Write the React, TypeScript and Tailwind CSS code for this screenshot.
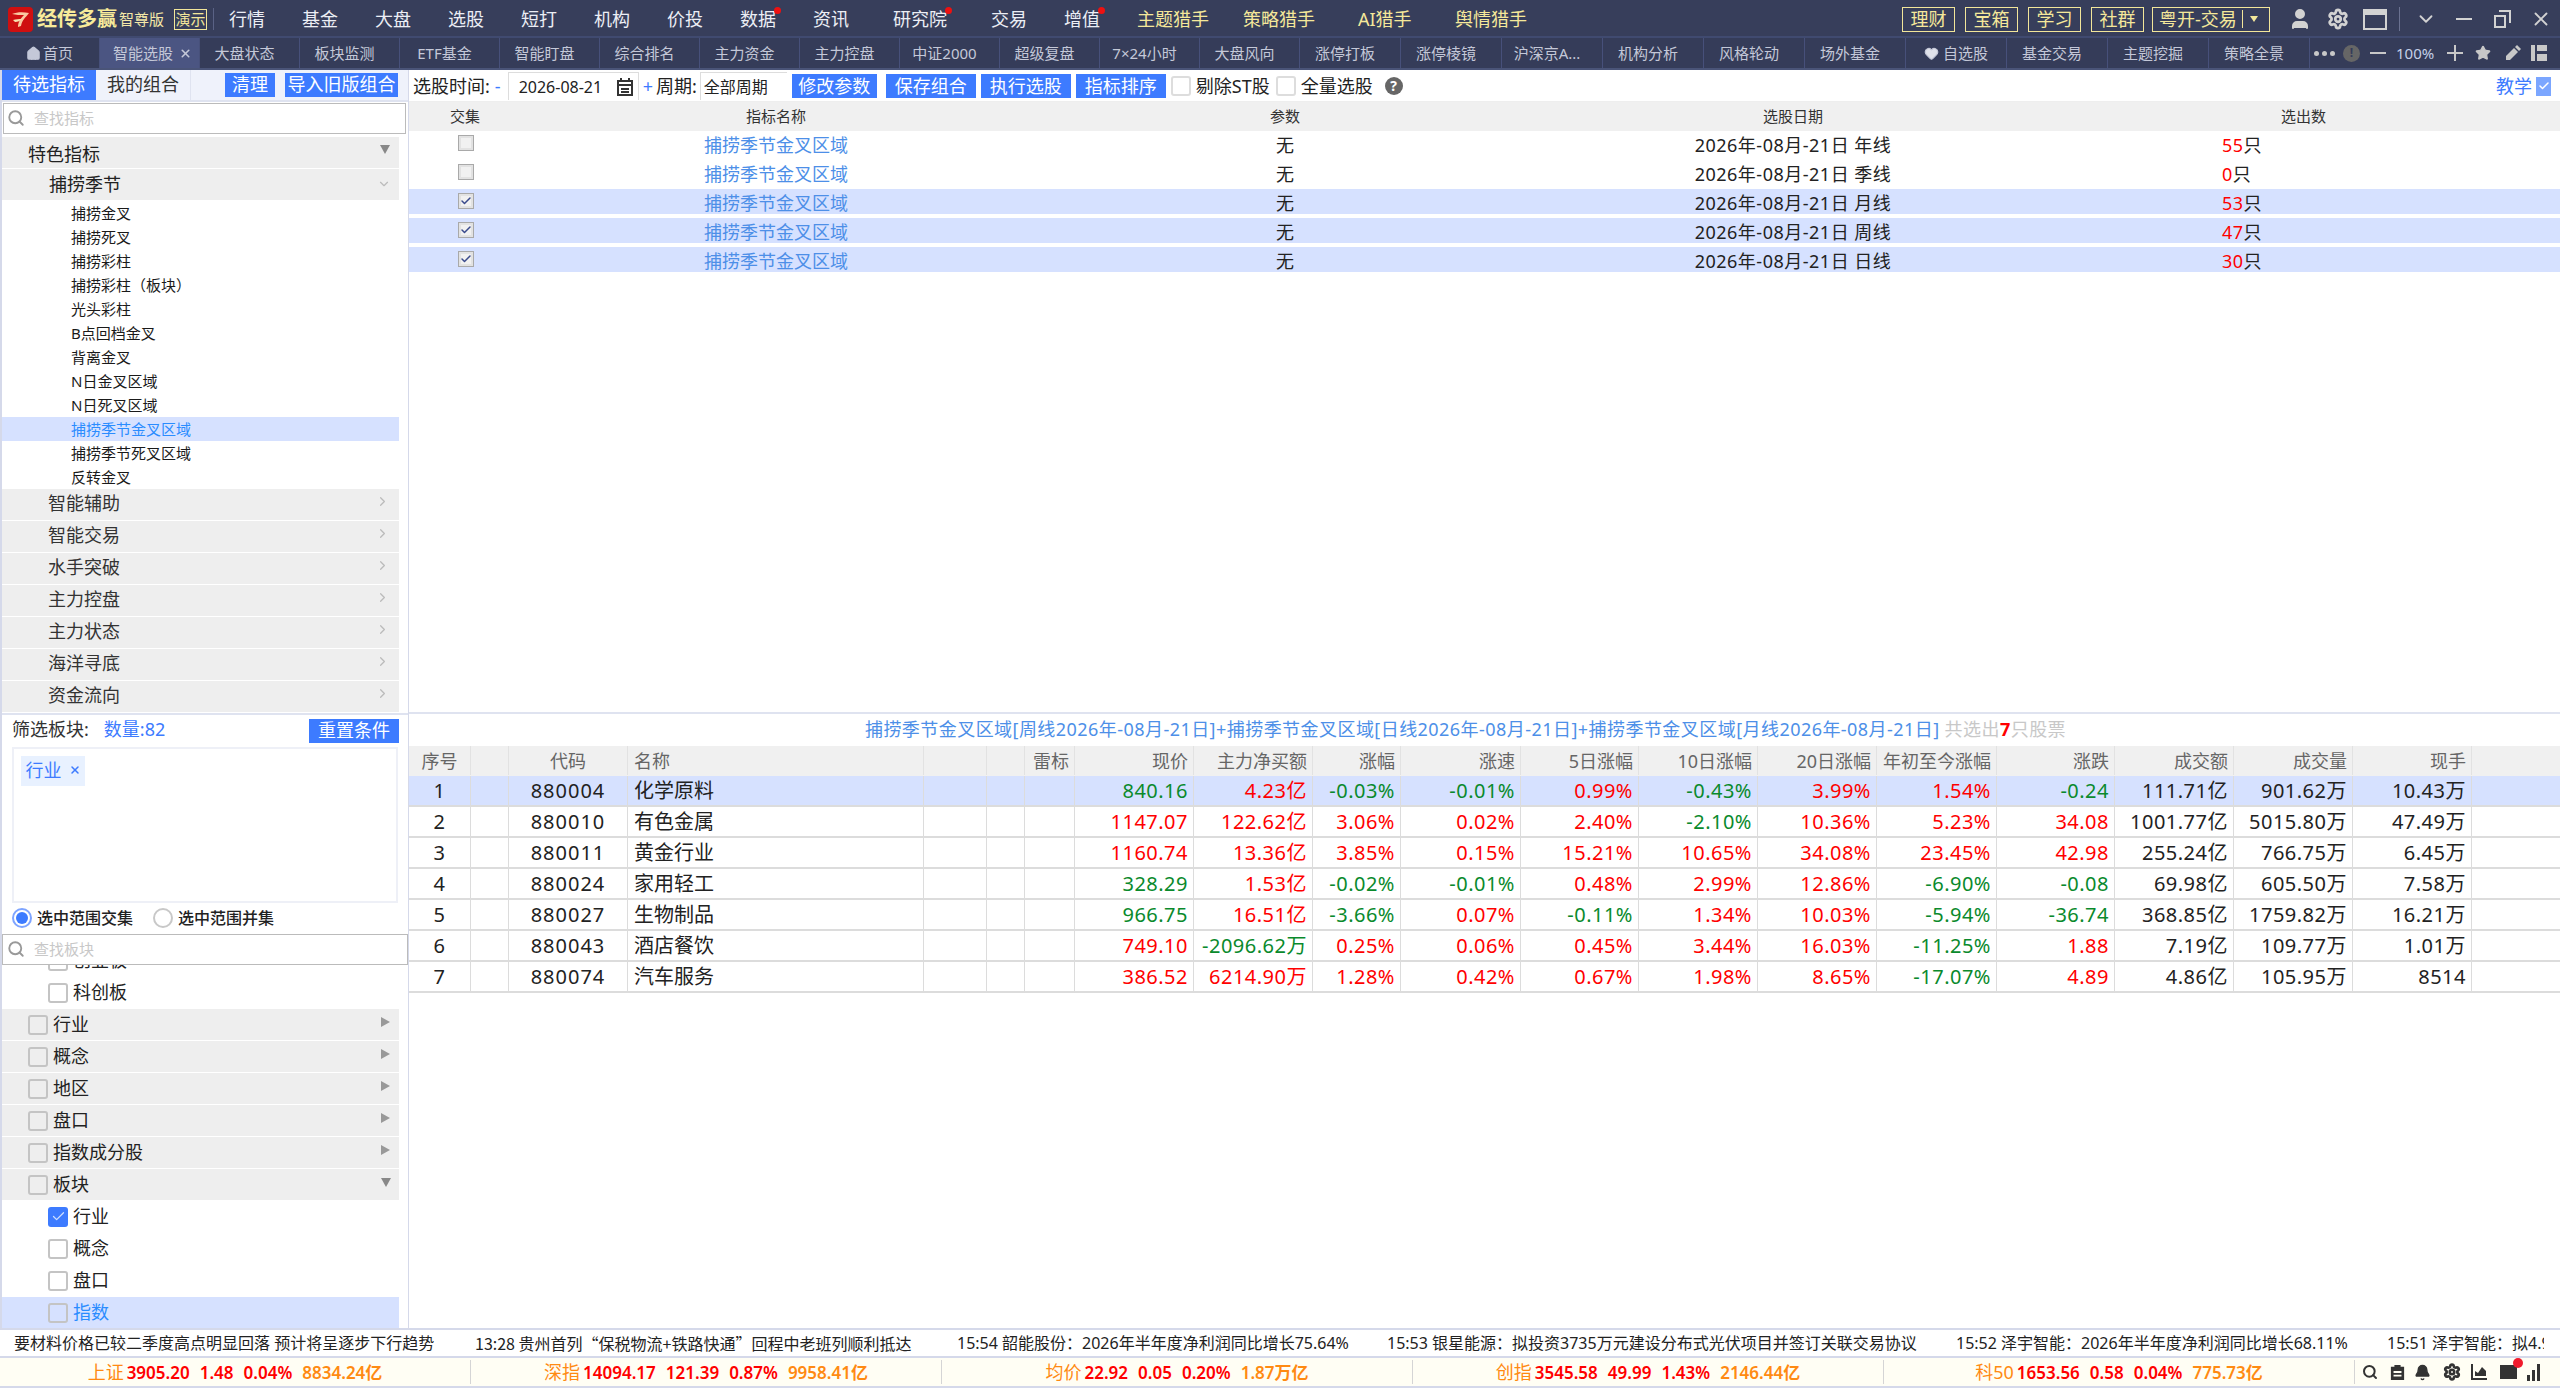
import { Bell, Check, ChevronDown, ChevronRight, Home, Heart, Search, Settings, Star, User, X } from "lucide-react";

const navItems = [
  { label: "行情" }, { label: "基金" }, { label: "大盘" }, { label: "选股" }, { label: "短打" },
  { label: "机构" }, { label: "价投" }, { label: "数据", dot: true }, { label: "资讯" },
  { label: "研究院", dot: true, wide: true }, { label: "交易" }, { label: "增值", dot: true },
];
const tabs = ["首页", "智能选股", "大盘状态", "板块监测", "ETF基金", "智能盯盘", "综合排名", "主力资金", "主力控盘", "中证2000", "超级复盘", "7×24小时", "大盘风向", "涨停打板", "涨停棱镜", "沪深京A...", "机构分析", "风格轮动", "场外基金", "自选股", "基金交易", "主题挖掘", "策略全景"];
const treeItems = ["捕捞金叉", "捕捞死叉", "捕捞彩柱", "捕捞彩柱（板块）", "光头彩柱", "B点回档金叉", "背离金叉", "N日金叉区域", "N日死叉区域", "捕捞季节金叉区域", "捕捞季节死叉区域", "反转金叉"];
const groups = ["智能辅助", "智能交易", "水手突破", "主力控盘", "主力状态", "海洋寻底", "资金流向"];
const picks = [
  { period: "年线", count: "55", on: false },
  { period: "季线", count: "0", on: false },
  { period: "月线", count: "53", on: true },
  { period: "周线", count: "47", on: true },
  { period: "日线", count: "30", on: true },
];
const heads = ["序号", "", "代码", "名称", "", "", "雷标", "现价", "主力净买额", "涨幅", "涨速", "5日涨幅", "10日涨幅", "20日涨幅", "年初至今涨幅", "涨跌", "成交额", "成交量", "现手", ""];
const stocks = [
  ["880004", "化学原料", "840.16", "4.23亿", "-0.03%", "-0.01%", "0.99%", "-0.43%", "3.99%", "1.54%", "-0.24", "111.71亿", "901.62万", "10.43万"],
  ["880010", "有色金属", "1147.07", "122.62亿", "3.06%", "0.02%", "2.40%", "-2.10%", "10.36%", "5.23%", "34.08", "1001.77亿", "5015.80万", "47.49万"],
  ["880011", "黄金行业", "1160.74", "13.36亿", "3.85%", "0.15%", "15.21%", "10.65%", "34.08%", "23.45%", "42.98", "255.24亿", "766.75万", "6.45万"],
  ["880024", "家用轻工", "328.29", "1.53亿", "-0.02%", "-0.01%", "0.48%", "2.99%", "12.86%", "-6.90%", "-0.08", "69.98亿", "605.50万", "7.58万"],
  ["880027", "生物制品", "966.75", "16.51亿", "-3.66%", "0.07%", "-0.11%", "1.34%", "10.03%", "-5.94%", "-36.74", "368.85亿", "1759.82万", "16.21万"],
  ["880043", "酒店餐饮", "749.10", "-2096.62万", "0.25%", "0.06%", "0.45%", "3.44%", "16.03%", "-11.25%", "1.88", "7.19亿", "109.77万", "1.01万"],
  ["880074", "汽车服务", "386.52", "6214.90万", "1.28%", "0.42%", "0.67%", "1.98%", "8.65%", "-17.07%", "4.89", "4.86亿", "105.95万", "8514"],
];
const indexes = [
  ["上证", "3905.20", "1.48", "0.04%", "8834.24亿"],
  ["深指", "14094.17", "121.39", "0.87%", "9958.41亿"],
  ["均价", "22.92", "0.05", "0.20%", "1.87万亿"],
  ["创指", "3545.58", "49.99", "1.43%", "2146.44亿"],
  ["科50", "1653.56", "0.58", "0.04%", "775.73亿"],
];
const gridCols = "grid grid-cols-[62px_38px_119px_296px_63px_38px_50px_119px_119px_88px_120px_118px_119px_119px_120px_118px_119px_119px_119px_1fr]";

function Btn({ children, className = "" }: { children: React.ReactNode; className?: string }) {
  return <div className={`flex h-[24px] items-center justify-center whitespace-nowrap bg-[#3d7bff] text-[18px] text-white ${className}`}>{children}</div>;
}

function Box({ checked = false }: { checked?: boolean }) {
  return checked ? (
    <span className="flex h-[20px] w-[20px] shrink-0 items-center justify-center rounded-[3px] bg-[#3d7bff]">
      <Check size={15} color="#cfe0ff" strokeWidth={2} />
    </span>
  ) : (
    <span className="block h-[20px] w-[20px] shrink-0 rounded-[3px] border-2 border-[#c4c4c4] bg-transparent" />
  );
}

function TickBox({ on }: { on: boolean }) {
  return (
    <span className="flex h-[16px] w-[16px] items-center justify-center border border-[#a9a9a9] bg-[#f1f1f1] shadow-[inset_0_0_0_2px_#e2e2e2]">
      {on && <Check size={12} color="#3a4a8c" strokeWidth={3} />}
    </span>
  );
}

function SideRow({ label, arrow = "right" }: { label: string; arrow?: "right" | "down" }) {
  return (
    <div className="mb-px flex h-[31px] w-[397px] shrink-0 items-center bg-[#eeeeee] pl-[26px] pr-[9px] text-[18px] text-[#222]">
      <Box />
      <span className="ml-[5px]">{label}</span>
      <span className={`ml-auto h-0 w-0 border-solid ${arrow === "right" ? "-mt-[6px] border-y-[5px] border-l-[9px] border-y-transparent border-l-[#999]" : "-mt-[4px] -mr-px border-x-[5px] border-t-[9px] border-x-transparent border-t-[#888]"}`} />
    </div>
  );
}

function Logo() {
  return (
    <svg width="25" height="25" viewBox="0 0 25 25" className="ml-[8px] shrink-0">
      <rect width="25" height="25" rx="4" fill="#cf0f10" />
      <path d="M4 7c5-2 11-2 17-1-3 4-7 7-8 13l-3 1c0-5 3-9 6-12-4 0-8 0-12-1z" fill="#f9c9a0" />
      <path d="M5 13c3-1 6-1 9-1-2 2-4 3-7 3z" fill="#f7e3b0" />
    </svg>
  );
}

function TopBar() {
  return (
    <header className="flex h-[38px] items-center border-b-2 border-[#404a70] bg-[#373e5b] pt-[2px]">
      <Logo />
      <span className="ml-[4px] w-[81px] whitespace-nowrap text-[20px] font-bold leading-none text-[#f8eb9a]">经传多赢</span>
      <span className="ml-px w-[50px] whitespace-nowrap text-[15px] leading-none text-[#f4e8a8]">智尊版</span>
      <span className="ml-[5px] flex h-[21px] w-[33px] items-center justify-center border border-[#f2e69a] text-[15px] leading-none text-[#f2e69a]">演示</span>
      <span className="ml-[6px] mr-[15px] h-[22px] w-px bg-[#5a6285]" />
      <nav className="flex items-center">
        {navItems.map((n) => (
          <span key={n.label} className={`relative whitespace-nowrap text-[18px] leading-none text-[#eceef5] ${n.wide ? "mr-[44px] ml-[7px]" : "mr-[37px]"}`}>
            {n.label}
            {n.dot && <span className="absolute -right-[5px] -top-[3px] h-[7px] w-[7px] rounded-full bg-[#ee1111]" />}
          </span>
        ))}
      </nav>
      <div className="flex items-center text-[18px] leading-none text-[#f5e89a]">
        <span className="w-[106px]">主题猎手</span>
        <span className="w-[115px]">策略猎手</span>
        <span className="w-[97px]">AI猎手</span>
        <span>舆情猎手</span>
      </div>
      <div className="ml-auto flex items-center text-[18px] leading-none text-[#f5e89a]">
        {["理财", "宝箱", "学习", "社群"].map((t, i) => (
          <span key={t} className={`flex h-[25px] w-[53px] items-center justify-center border border-[#f2e69a] ${i === 3 ? "mr-[8px]" : "mr-[10px]"}`}>{t}</span>
        ))}
        <span className="flex h-[25px] w-[118px] items-center border border-[#f2e69a] pl-[6px]">
          粤开-交易
          <span className="ml-[5px] h-[18px] w-px bg-[#f2e69a]" />
          <span className="ml-[7px] h-0 w-0 border-x-[4px] border-t-[6px] border-x-transparent border-t-[#f2e69a]" />
        </span>
      </div>
      <div className="ml-[18px] mr-[8px] flex items-center text-[#d2d2d2]">
        <User size={24} fill="#d2d2d2" />
        <Settings size={22} strokeWidth={3} className="ml-[15px]" />
        <span className="ml-[14px] h-[21px] w-[24px] border-2 border-t-[6px] border-[#d2d2d2]" />
        <span className="ml-[12px] h-[24px] w-px bg-[#6a7190]" />
        <ChevronDown size={22} className="ml-[15px]" />
        <span className="ml-[19px] h-[2px] w-[16px] bg-[#d2d2d2]" />
        <span className="relative ml-[22px] h-[18px] w-[17px]">
          <span className="absolute bottom-0 left-0 h-[13px] w-[12px] border-2 border-[#d2d2d2]" />
          <span className="absolute right-0 top-0 h-[13px] w-[12px] border-2 border-b-0 border-l-0 border-[#d2d2d2]" />
        </span>
        <X size={22} className="ml-[19px]" />
      </div>
    </header>
  );
}

function tabPadding(i: number, t: string) {
  if (i === 0 || t === "自选股") return "";
  if (i === 1) return "pl-[6px]";
  return "pr-[10px]";
}

function TabBar() {
  return (
    <div className="flex h-[32px] items-center border-b-[2px] border-[#4a5478] bg-[#353c59]">
      {tabs.map((t, i) => (
        <div key={t} className={`flex h-full shrink-0 items-center justify-center border-r border-[#47507a] whitespace-nowrap text-[15px] leading-none text-[#c4c8d8] ${i < 13 ? "w-[100px]" : "w-[101px]"} ${i === 1 ? "bg-[#4b5582]" : ""} ${tabPadding(i, t)}`}>
          {i === 0 && <Home size={15} fill="#c4c8d8" className="mr-[2px]" />}
          {t === "自选股" && <Heart size={15} fill="#e0e2ea" className="mr-[4px]" />}
          {t}
          {i === 1 && <X size={13} strokeWidth={3} className="ml-[6px]" />}
        </div>
      ))}
      <div className="flex flex-1 items-center text-[#c8c8c8]">
        <span className="ml-[4px] flex gap-[3px]">
          <span className="h-[5px] w-[5px] rounded-full bg-[#c8c8c8]" />
          <span className="h-[5px] w-[5px] rounded-full bg-[#c8c8c8]" />
          <span className="h-[5px] w-[5px] rounded-full bg-[#c8c8c8]" />
        </span>
        <span className="ml-[8px] flex h-[17px] w-[17px] items-center justify-center rounded-full bg-[#666] text-[12px] font-bold leading-none text-[#353c59]">!</span>
        <span className="ml-[10px] h-[2px] w-[16px] bg-[#c8c8c8]" />
        <span className="ml-[10px] w-[41px] whitespace-nowrap text-[15px] leading-none text-[#c4d0e8]">100%</span>
        <span className="relative ml-[10px] h-[16px] w-[16px] shrink-0">
          <span className="absolute left-0 top-[7px] h-[2px] w-[16px] bg-[#c8c8c8]" />
          <span className="absolute left-[7px] top-0 h-[16px] w-[2px] bg-[#c8c8c8]" />
        </span>
        <Star size={16} fill="#c8c8c8" className="ml-[12px] shrink-0" />
        <svg width="16" height="16" viewBox="0 0 16 16" className="ml-[14px] shrink-0" fill="#c8c8c8"><path d="M1 11 9 3l4 4-8 8H1zM10 2l2-2 4 4-2 2z" /></svg>
        <svg width="16" height="16" viewBox="0 0 16 16" className="ml-[10px] shrink-0" fill="#c8c8c8"><rect x="0" y="0" width="4" height="16" /><rect x="6" y="0" width="10" height="6" /><rect x="6" y="9" width="10" height="7" /></svg>
      </div>
    </div>
  );
}

function Sidebar() {
  return (
    <aside className="flex w-[409px] shrink-0 flex-col border-l-[2px] border-r border-[#d5d9ea]">
      <div className="flex h-[32px] items-center border-b-2 border-[#dfe3f0] bg-[#eff2fb] text-[18px]">
        <div className="flex h-full w-[94px] items-center justify-center bg-[#3d7bff] text-white">待选指标</div>
        <div className="flex h-full w-[95px] items-center justify-center border-r border-[#dfe3f0] text-[#333]">我的组合</div>
        <Btn className="ml-[34px] w-[50px]">清理</Btn>
        <Btn className="ml-[10px] w-[113px]">导入旧版组合</Btn>
      </div>
      <div className="ml-px mt-px flex h-[31px] w-[403px] items-center border border-[#bbb] pl-[3px] text-[15px] text-[#c8c8c8]">
        <Search size={18} color="#999" className="mr-[9px]" strokeWidth={2.5} />查找指标
      </div>
      <div className="mt-[3px] flex h-[576px] flex-col">
        <div className="mb-px flex h-[31px] w-[397px] items-center bg-[#eeeeee] pl-[26px] pr-[9px] pt-[5px] text-[18px] text-[#222]">
          特色指标
          <span className="-mt-[10px] ml-auto h-0 w-0 border-x-[5px] border-t-[9px] border-x-transparent border-t-[#888]" />
        </div>
        <div className="flex h-[31px] w-[397px] items-center bg-[#eeeeee] pl-[47px] pr-[8px] text-[18px] text-[#222]">
          捕捞季节
          <ChevronDown size={14} color="#bbb" className="ml-auto" />
        </div>
        <div className="h-[1px]" />
        {treeItems.map((t, i) => (
          <div key={t} className={`flex h-[24px] w-[397px] items-center pl-[69px] pt-[2px] text-[15px] leading-none ${i === 9 ? "bg-[#d6e1ff] text-[#2a8cff]" : "text-[#1a1a1a]"}`}>{t}</div>
        ))}
        {groups.map((g) => (
          <div key={g} className="mb-px flex h-[31px] w-[397px] items-center bg-[#eeeeee] pb-px pl-[46px] pr-[9px] text-[18px] text-[#333]">
            {g}
            <ChevronRight size={15} color="#bbb" className="-mt-[4px] ml-auto" />
          </div>
        ))}
      </div>
      <div className="border-t-2 border-[#dfe3f0]">
        <div className="flex h-[32px] items-center pl-[10px] pr-[9px] text-[18px]">
          <span className="pb-[2px] text-[#333]">筛选板块:</span>
          <span className="ml-[15px] pb-[2px] text-[#3d7bff]">数量:82</span>
          <Btn className="ml-auto w-[90px]">重置条件</Btn>
        </div>
        <div className="ml-[10px] h-[156px] w-[386px] border-2 border-[#eef0f7] p-[7px]">
          <span className="inline-flex h-[30px] w-[64px] items-center justify-center bg-[#e8f1ff] pb-[2px] text-[18px] leading-none text-[#3d7bff]">
            行业<X size={12} strokeWidth={3} className="ml-[7px]" />
          </span>
        </div>
        <div className="flex h-[31px] items-center pl-[10px] text-[16px] font-medium text-[#222]">
          <span className="flex h-[20px] w-[20px] items-center justify-center rounded-full border-2 border-[#7ea4ff]"><span className="h-[12px] w-[12px] rounded-full bg-[#3d7bff]" /></span>
          <span className="ml-[5px]">选中范围交集</span>
          <span className="ml-[20px] h-[20px] w-[20px] rounded-full border-2 border-[#c8c8c8]" />
          <span className="ml-[5px]">选中范围并集</span>
        </div>
        <div className="flex h-[31px] items-center border border-[#bbb] pl-[4px] text-[15px] text-[#c8c8c8]">
          <Search size={18} color="#999" className="mr-[9px]" strokeWidth={2.5} />查找板块
        </div>
      </div>
      <div className="flex h-[364px] flex-col justify-end overflow-hidden">
        {["创业板", "科创板"].map((t) => (
          <div key={t} className="mb-px flex h-[31px] shrink-0 items-center pl-[46px] text-[18px] text-[#222]"><Box /><span className="ml-[5px]">{t}</span></div>
        ))}
        {["行业", "概念", "地区", "盘口", "指数成分股"].map((t) => <SideRow key={t} label={t} />)}
        <SideRow label="板块" arrow="down" />
        {["行业", "概念", "盘口"].map((t, i) => (
          <div key={t} className="mb-px flex h-[31px] shrink-0 items-center pl-[46px] text-[18px] text-[#222]"><Box checked={i === 0} /><span className="ml-[5px]">{t}</span></div>
        ))}
        <div className="flex h-[31px] w-[397px] shrink-0 items-center bg-[#d6e1ff] pl-[46px] text-[18px] text-[#2a8cff]"><Box /><span className="ml-[5px]">指数</span></div>
      </div>
    </aside>
  );
}

function Toolbar() {
  return (
    <div className="flex h-[32px] items-center border-b border-[#eee] pl-[4px] pt-px text-[18px] leading-none text-[#222]">
      <span className="whitespace-nowrap">选股时间:</span>
      <span className="ml-[5px] text-[#3d7bff]">-</span>
      <span className="ml-[7px] flex h-[28px] w-[131px] items-center border-l border-r border-t border-[#ddd] pl-[10px] text-[16px]">
        <span className="w-[83px] whitespace-nowrap">2026-08-21</span>
        <svg width="16" height="18" viewBox="0 0 16 18" className="ml-[15px]" fill="none" stroke="#333" strokeWidth="2"><path d="M1 3h14v14H1zM1 7h14M4 0v3M12 0v3M4 11h8M4 14h8" /></svg>
      </span>
      <span className="ml-[4px] text-[#3d7bff]">+</span>
      <span className="ml-[3px] whitespace-nowrap">周期:</span>
      <span className="ml-[3px] flex h-[28px] w-[87px] items-center border-l border-t border-[#ddd] pl-[3px] text-[16px]">全部周期</span>
      <Btn className="ml-[5px] w-[85px]">修改参数</Btn>
      <Btn className="ml-[9px] w-[90px]">保存组合</Btn>
      <Btn className="ml-[5px] w-[90px]">执行选股</Btn>
      <Btn className="ml-[5px] w-[90px]">指标排序</Btn>
      <span className="ml-[5px] h-[20px] w-[20px] rounded-[3px] border-2 border-[#ddd]" />
      <span className="ml-[5px] whitespace-nowrap">剔除ST股</span>
      <span className="ml-[6px] h-[20px] w-[20px] rounded-[3px] border-2 border-[#ddd]" />
      <span className="ml-[5px] whitespace-nowrap">全量选股</span>
      <span className="ml-[12px] flex h-[18px] w-[18px] items-center justify-center rounded-full bg-[#666] text-[14px] font-bold leading-none text-white">?</span>
      <span className="ml-auto text-[#3d7bff]">教学</span>
      <span className="ml-[4px] mr-[9px] flex h-[19px] w-[15px] items-center justify-center bg-[#7ba6ff]"><Check size={12} color="#fff" strokeWidth={3} /></span>
    </div>
  );
}

function PickTable() {
  return (
    <div className="h-[610px]">
      <div className="grid h-[29px] grid-cols-[112px_510px_508px_508px_1fr] items-center bg-[#f0f0f0] text-center text-[15px] leading-none text-[#333]">
        <span>交集</span><span>指标名称</span><span>参数</span><span>选股日期</span><span>选出数</span>
      </div>
      {picks.map((p) => (
        <div key={p.period} className={`mb-[4px] grid h-[25px] grid-cols-[112px_510px_508px_508px_1fr] items-center pt-[2px] text-center text-[18px] leading-none ${p.on ? "bg-[#d6e1ff]" : ""}`}>
          <span className="-mt-[3px] flex justify-center pl-[2px]"><TickBox on={p.on} /></span>
          <span className="text-[#4d8fe8]">捕捞季节金叉区域</span>
          <span className="text-[#222]">无</span>
          <span className="whitespace-nowrap tracking-[0.5px] text-[#222]">2026年-08月-21日 {p.period}</span>
          <span className="pl-[175px] text-left text-[#222]"><span className="tracking-[0.5px] text-[#f00]">{p.count}</span>只</span>
        </div>
      ))}
    </div>
  );
}

function cellColor(col: number, row: string[]) {
  if (col === 2) return row[4].startsWith("-") ? "text-[#0a8a2c]" : "text-[#f00]";
  if (col >= 3 && col <= 10) return row[col].startsWith("-") ? "text-[#0a8a2c]" : "text-[#f00]";
  return "text-[#222]";
}

function StockTable() {
  return (
    <div className="flex-1">
      <div className="flex h-[34px] items-center justify-center whitespace-nowrap border-t-2 border-[#dfe3f0] pb-[2px] pr-[38px] text-[18px] leading-none tracking-[0.45px] text-[#4d8fe8]">
        捕捞季节金叉区域[周线2026年-08月-21日]+捕捞季节金叉区域[日线2026年-08月-21日]+捕捞季节金叉区域[月线2026年-08月-21日]
        <span className="ml-[5px] text-[#c8c8c8]">共选出<span className="font-bold text-[#f00]">7</span>只股票</span>
      </div>
      <div className={`${gridCols} h-[30px] bg-[#f0f0f0] pb-px text-[18px] leading-none text-[#666]`}>
        {heads.map((h, i) => (
          <div key={i} className={`flex items-center whitespace-nowrap border-r border-[#e2e2e2] last:border-r-0 ${i < 3 ? "justify-center" : i === 3 ? "justify-start pl-[6px]" : "justify-end pr-[5px]"}`}>{h}</div>
        ))}
      </div>
      {stocks.map((s, r) => (
        <div key={s[0]} className={`${gridCols} h-[31px] border-b-2 border-[#dcdcdc] text-[20px] leading-none tracking-[0.5px] text-[#222] ${r === 0 ? "bg-[#d6e1ff]" : ""}`}>
          <div className="flex items-center justify-center border-r border-[#dcdcdc]">{r + 1}</div>
          <div className="border-r border-[#dcdcdc]" />
          <div className="flex items-center justify-center border-r border-[#dcdcdc] tracking-[1px]">{s[0]}</div>
          <div className="flex items-center border-r border-[#dcdcdc] pl-[6px] tracking-normal">{s[1]}</div>
          <div className="border-r border-[#dcdcdc]" />
          <div className="border-r border-[#dcdcdc]" />
          <div className="border-r border-[#dcdcdc]" />
          {s.slice(2).map((v, c) => (
            <div key={c} className={`flex items-center justify-end whitespace-nowrap border-r border-[#dcdcdc] pr-[5px] ${cellColor(c + 2, s)}`}>{v}</div>
          ))}
          <div />
        </div>
      ))}
    </div>
  );
}

function Ticker() {
  return (
    <div className="flex h-[30px] items-center overflow-hidden whitespace-nowrap border-y-2 border-[#d5d9ea] text-[16px] leading-none text-[#222]">
      <span className="ml-[14px] w-[461px] shrink-0">要材料价格已较二季度高点明显回落 预计将呈逐步下行趋势</span>
      <span className="w-[482px] shrink-0 font-['Noto_Sans_CJK_SC',sans-serif]">13:28 贵州首列“保税物流+铁路快通”回程中老班列顺利抵达</span>
      <span className="w-[430px] shrink-0">15:54 韶能股份：2026年半年度净利润同比增长75.64%</span>
      <span className="w-[569px] shrink-0">15:53 银星能源：拟投资3735万元建设分布式光伏项目并签订关联交易协议</span>
      <span className="w-[431px] shrink-0">15:52 泽宇智能：2026年半年度净利润同比增长68.11%</span>
      <span className="w-[157px] shrink-0 overflow-hidden">15:51 泽宇智能：拟4.9</span>
    </div>
  );
}

function StatusBar() {
  return (
    <div className="flex h-[30px] items-center border-b-2 border-[#d5d9ea] bg-[#fffef4] text-[17px] font-semibold leading-none">
      {indexes.map((x) => (
        <div key={x[0]} className="flex h-[24px] w-[471px] shrink-0 items-center justify-center whitespace-nowrap border-r border-[#d5d5d5]">
          <span className="text-[18px] font-normal text-[#ff8a12]">{x[0]}</span>
          <span className="ml-[3px] text-[#f00]">{x[1]}</span>
          <span className="ml-[10px] text-[#f00]">{x[2]}</span>
          <span className="ml-[10px] text-[#f00]">{x[3]}</span>
          <span className="ml-[10px] text-[#ff8a12]">{x[4]}</span>
        </div>
      ))}
      <div className="ml-[7px] flex items-center text-[#333]">
        <Search size={16} strokeWidth={3} />
        <svg width="15" height="18" viewBox="0 0 17 18" className="ml-[12px]" fill="#333"><path d="M1 3h4V1h7v2h4v15H1zM4 8v2h9V8zm0 4v2h9v-2z" /></svg>
        <Bell size={17} fill="#333" className="ml-[9px]" />
        <Settings size={18} strokeWidth={3.5} className="ml-[12px]" />
        <svg width="18" height="18" viewBox="0 0 18 18" className="ml-[9px]" fill="#333"><path d="M1 1h2v14h14v2H1zM5 13V8l3 2 4-6 4 4v5z" /></svg>
        <span className="relative ml-[12px] h-[14px] w-[17px] bg-[#333]">
          <span className="absolute -right-[6px] -top-[7px] h-[10px] w-[10px] rounded-full bg-[#f01b2c]" />
        </span>
        <svg width="14" height="18" viewBox="0 0 14 18" className="ml-[10px]" fill="#333"><rect x="0" y="12" width="3" height="6" /><rect x="5" y="7" width="3" height="11" /><rect x="10" y="1" width="3" height="17" /></svg>
      </div>
    </div>
  );
}

export default function App() {
  return (
    <div className="flex h-[1390px] w-[2560px] flex-col overflow-hidden bg-white font-['Noto_Sans','Noto_Sans_CJK_SC',sans-serif]">
      <TopBar />
      <TabBar />
      <div className="flex h-[1258px] min-h-0">
        <Sidebar />
        <main className="flex min-w-0 flex-1 flex-col">
          <Toolbar />
          <PickTable />
          <StockTable />
        </main>
      </div>
      <Ticker />
      <StatusBar />
    </div>
  );
}
